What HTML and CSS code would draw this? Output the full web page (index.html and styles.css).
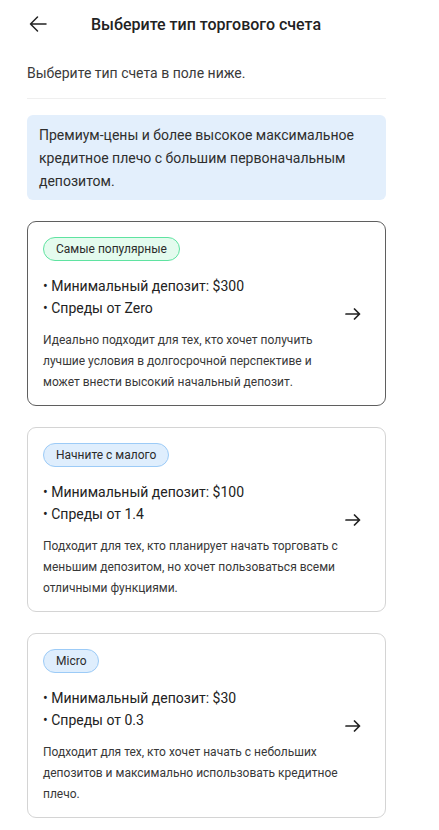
FILE: index.html
```html
<!DOCTYPE html>
<html lang="ru">
<head>
<meta charset="utf-8">
<title>Выберите тип торгового счета</title>
<link rel="stylesheet" href="styles.css">
</head>
<body>
<div class="page">
  <header class="header">
    <svg class="back" width="18" height="18" viewBox="0 0 18 18" aria-hidden="true">
      <path d="M17 9H1.5M8.5 2L1.5 9l7 7" fill="none" stroke="#222" stroke-width="1.5" stroke-linecap="round" stroke-linejoin="round"/>
    </svg>
    <h1 class="title">Выберите тип торгового счета</h1>
  </header>

  <p class="intro">Выберите тип счета в поле ниже.</p>

  <div class="info">Премиум-цены и более высокое максимальное кредитное плечо с большим первоначальным депозитом.</div>

  <div class="cards">
    <div class="card card-selected">
      <div class="card-body">
        <span class="badge badge-green">Самые популярные</span>
        <ul class="points">
          <li>• Минимальный депозит: $300</li>
          <li>• Спреды от Zero</li>
        </ul>
        <p class="desc">Идеально подходит для тех, кто хочет получить лучшие условия в долгосрочной перспективе и может внести высокий начальный депозит.</p>
      </div>
      <svg class="go" width="16" height="12" viewBox="0 0 16 12" aria-hidden="true">
        <path d="M1 6h13.5M9.5 1l5 5-5 5" fill="none" stroke="#222" stroke-width="1.7" stroke-linecap="round" stroke-linejoin="round"/>
      </svg>
    </div>

    <div class="card">
      <div class="card-body">
        <span class="badge badge-blue">Начните с малого</span>
        <ul class="points">
          <li>• Минимальный депозит: $100</li>
          <li>• Спреды от 1.4</li>
        </ul>
        <p class="desc">Подходит для тех, кто планирует начать торговать с меньшим депозитом, но хочет пользоваться всеми отличными функциями.</p>
      </div>
      <svg class="go" width="16" height="12" viewBox="0 0 16 12" aria-hidden="true">
        <path d="M1 6h13.5M9.5 1l5 5-5 5" fill="none" stroke="#222" stroke-width="1.7" stroke-linecap="round" stroke-linejoin="round"/>
      </svg>
    </div>

    <div class="card">
      <div class="card-body">
        <span class="badge badge-blue">Micro</span>
        <ul class="points">
          <li>• Минимальный депозит: $30</li>
          <li>• Спреды от 0.3</li>
        </ul>
        <p class="desc">Подходит для тех, кто хочет начать с небольших депозитов и максимально использовать кредитное плечо.</p>
      </div>
      <svg class="go" width="16" height="12" viewBox="0 0 16 12" aria-hidden="true">
        <path d="M1 6h13.5M9.5 1l5 5-5 5" fill="none" stroke="#222" stroke-width="1.7" stroke-linecap="round" stroke-linejoin="round"/>
      </svg>
    </div>
  </div>
</div>
</body>
</html>
```

FILE: styles.css
```css
* { box-sizing: border-box; }

html, body {
  margin: 0;
  padding: 0;
  background: #ffffff;
}

body {
  font-family: Roboto, "Noto Sans", "Liberation Sans", sans-serif;
  color: #222;
}

.page {
  width: 359px;
  margin-left: 27px;
}

.header {
  display: flex;
  align-items: center;
  height: 48px;
  margin-left: 2px;
}

.back {
  flex: none;
  display: block;
}

.title {
  margin: 0 0 0 44px;
  font-size: 16px;
  font-weight: 500;
  color: #222;
  letter-spacing: 0;
}

.intro {
  margin: 14px 0 0;
  padding-bottom: 14px;
  font-size: 14px;
  line-height: 22px;
  color: #3a3a3a;
  border-bottom: 1px solid #efefef;
}

.info {
  margin-top: 16px;
  padding: 9px 12px 7px;
  background: #e3effc;
  border-radius: 6px;
  font-size: 14px;
  line-height: 23px;
  color: #2e2e2e;
}

.cards {
  display: flex;
  flex-direction: column;
  gap: 21px;
  margin-top: 21px;
}

.card {
  display: flex;
  align-items: center;
  gap: 3px;
  height: 185px;
  padding: 15px 24px 11px 15px;
  border: 1px solid #d4d4d4;
  border-radius: 9px;
  background: #fff;
}

.card-selected {
  border-color: #5f5f5f;
}

.card-body {
  flex: 1;
  min-width: 0;
  align-self: flex-start;
}

.badge {
  display: inline-block;
  height: 24px;
  padding: 0 12px;
  border-radius: 12px;
  font-size: 12px;
  line-height: 22px;
  color: #2b2b2b;
  border: 1px solid;
}

.badge-green {
  background: #e4fbee;
  border-color: #5fe3a1;
}

.badge-blue {
  background: #dfeefd;
  border-color: #9ccbf7;
}

.points {
  list-style: none;
  margin: 14px 0 0;
  padding: 0;
  font-size: 14px;
  line-height: 22px;
  color: #222;
}

.desc {
  margin: 11px 0 0;
  font-size: 12px;
  line-height: 21px;
  color: #383838;
}

.go {
  flex: none;
  display: block;
  margin-bottom: 4px;
}
```
